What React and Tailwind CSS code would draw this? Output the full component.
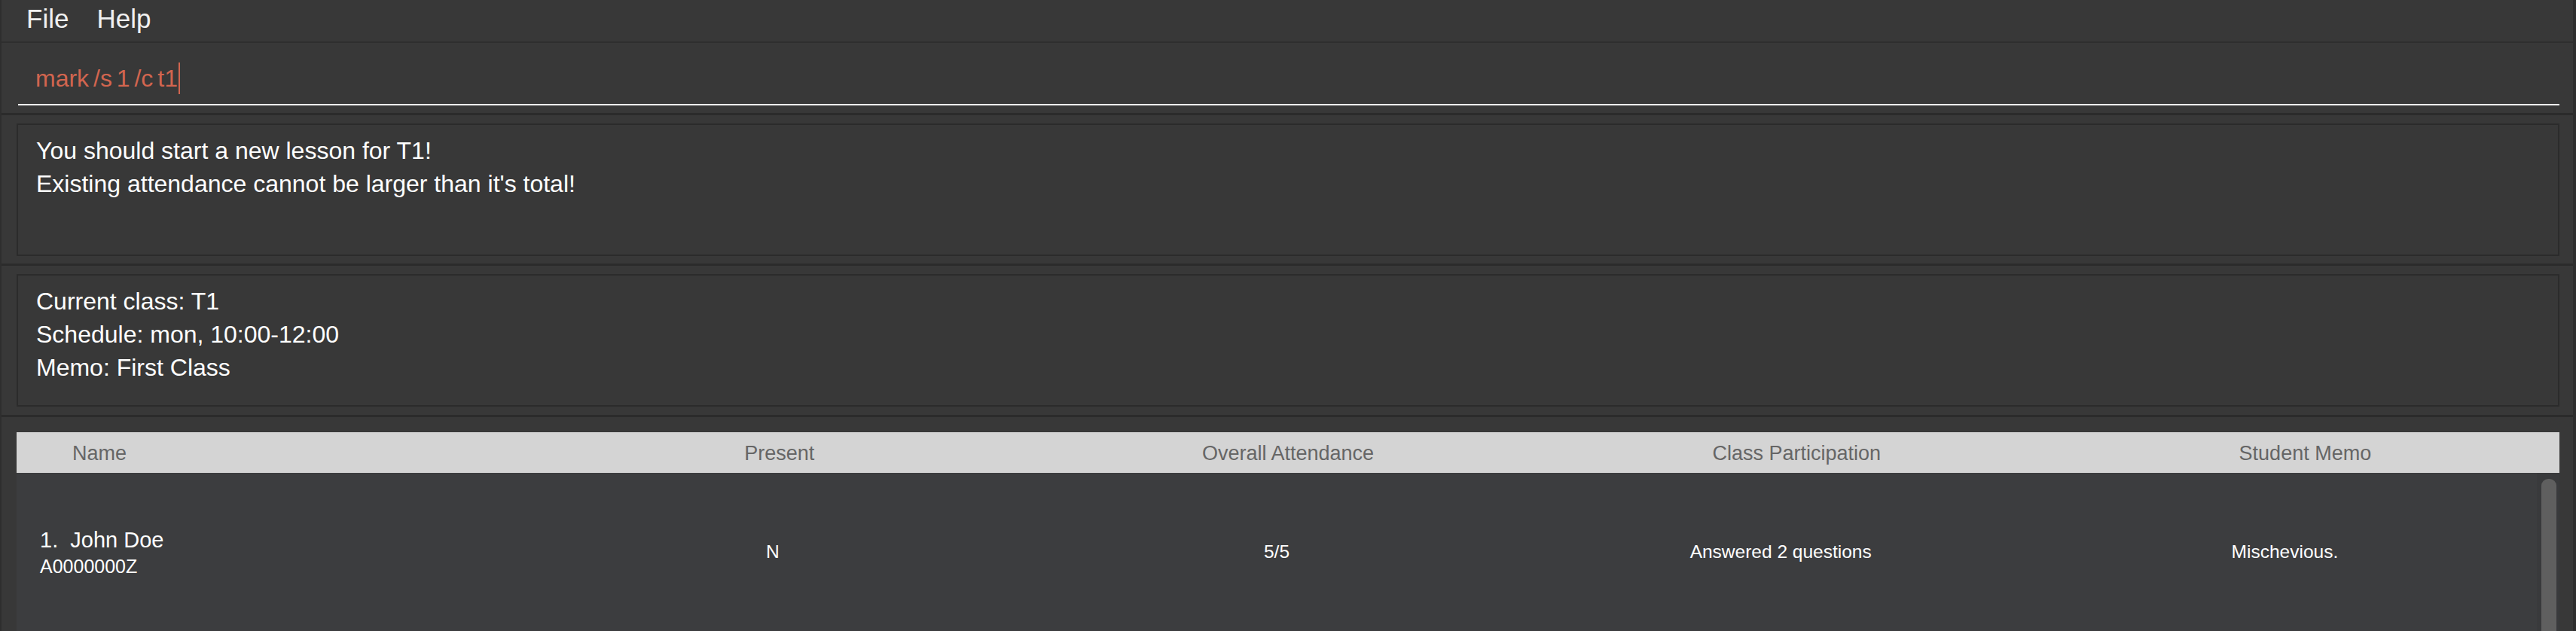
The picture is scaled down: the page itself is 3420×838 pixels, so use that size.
const headers = ['Name', 'Present', 'Overall Attendance', 'Class Participation', 'Student Memo'];

const student = {
  index: 1,
  name: 'John Doe',
  id: 'A0000000Z',
  present: 'N',
  attendance: '5/5',
  participation: 'Answered 2 questions',
  memo: 'Mischevious.',
};

function Band() {
  return <div className="h-[3px] shrink-0 bg-[#2b2b2b]" />;
}

function TextBox({ lines, pb }) {
  return (
    <div className={`shrink-0 pt-[11px] ${pb}`}>
      <div className="ml-[20px] mr-[18px] h-[176px] border-2 border-[#2b2b2b] pl-[24px] pt-[12px] text-[32px] leading-[44px] text-white">
        {lines.map((l) => (
          <div key={l}>{l}</div>
        ))}
      </div>
    </div>
  );
}

export default function App() {
  return (
    <div className="flex h-[838px] w-[3420px] flex-col overflow-hidden border-l-2 border-r-4 border-[#2e2e2e] bg-[#383838] font-['Liberation_Sans',Arial,sans-serif] text-white">
      {/* menu bar */}
      <div className="flex h-[57px] shrink-0 gap-[37px] border-b-2 border-[#2e2e2e] pl-[33px] text-[35px] leading-[50px] text-[#f0f0f0]">
        <span>File</span>
        <span>Help</span>
      </div>

      {/* command box */}
      <div className="shrink-0 pt-[26px] pb-[10px]">
        <div className="ml-[22px] mr-[18px] h-[57px] border-b-2 border-white pl-[23px]">
          <div className="flex h-[42px] items-center text-[32px] leading-[42px] text-[#d2654f]">
            <span className="whitespace-pre [word-spacing:-3px]">mark /s 1 /c t1</span>
            <span className="ml-[1px] h-[42px] w-[2px] bg-[#d2654f]" />
          </div>
        </div>
      </div>

      <Band />
      <TextBox
        pb="pb-[10px]"
        lines={['You should start a new lesson for T1!', "Existing attendance cannot be larger than it's total!"]}
      />
      <Band />
      <TextBox pb="pb-[11px]" lines={['Current class: T1', 'Schedule: mon, 10:00-12:00', 'Memo: First Class']} />
      <Band />

      {/* student table */}
      <div className="flex min-h-0 flex-1 flex-col overflow-hidden pt-[20px]">
        <div className="ml-[20px] mr-[18px] flex flex-col">
          <div className="grid h-[54px] shrink-0 grid-cols-5 items-center bg-[#d4d4d4] pt-[2px] text-[27px] text-[#666666]">
            {headers.map((h, i) => (
              <div key={h} className={i === 0 ? 'pl-[74px]' : 'text-center'}>
                {h}
              </div>
            ))}
          </div>
          <div className="flex h-[240px]">
            <div className="grid h-[211px] flex-1 grid-cols-5 items-center bg-[#3c3d3f] text-[24.5px] text-white">
              <div className="pl-[31px]">
                <div className="whitespace-pre text-[29px] leading-[34px]">
                  {student.index}.  {student.name}
                </div>
                <div className="mt-[3px] text-[25px] leading-[30px]">{student.id}</div>
              </div>
              <div className="text-center">{student.present}</div>
              <div className="text-center">{student.attendance}</div>
              <div className="text-center">{student.participation}</div>
              <div className="text-center">{student.memo}</div>
            </div>
            <div className="w-[30px] shrink-0 bg-[#393a3c] pl-[6px] pt-[8px]">
              <div className="h-[220px] w-[20px] rounded-[9px] bg-[#5f5f5f]" />
            </div>
          </div>
        </div>
      </div>
    </div>
  );
}
